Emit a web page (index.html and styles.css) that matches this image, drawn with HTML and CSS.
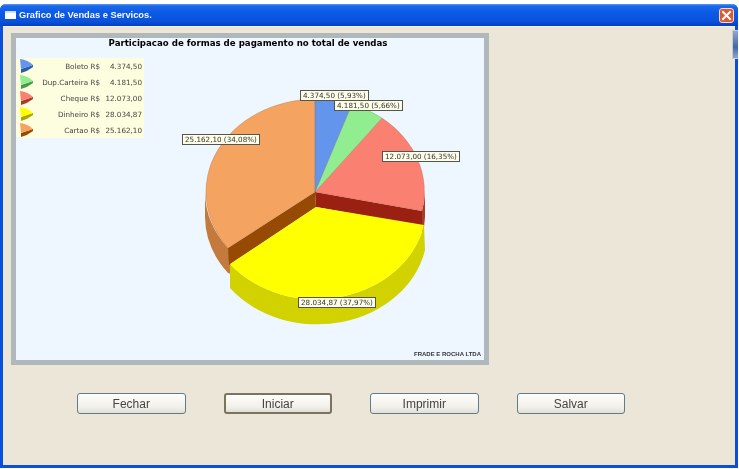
FILE: index.html
```html
<!DOCTYPE html>
<html lang="en">
<head>
  <meta charset="UTF-8">
  <meta name="viewport" content="width=device-width, initial-scale=1.0">
  <title>Grafico de Vendas e Servicos.</title>
  <link rel="stylesheet" href="styles.css">
</head>
<body>
  <div class="window">
    <header class="titlebar">
      <span class="app-icon"></span>
      <h1>Grafico de Vendas e Servicos.</h1>
      <button class="close-btn" aria-label="Fechar">
        <svg width="11" height="11" viewBox="0 0 11 11"><path d="M2 2 L9 9 M9 2 L2 9" stroke="#fff" stroke-width="2" stroke-linecap="square"/></svg>
      </button>
    </header>

    <div class="content">
      <span class="scroll-stub"></span>

      <div class="chart-frame">
        <div class="chart">
          <svg class="pie" viewBox="16 38 469 322" width="469" height="322">
            <!-- outer sides -->
            <path fill="#c47a3c" d="M205 192 A110 93 0 0 0 228 248 L231 262 L231 274 L228 273 A110 93 0 0 1 205 217 Z"/>
            <path fill="#a83a2a" d="M425 192 A110 93 0 0 1 422 211 L422 236 A110 93 0 0 0 425 217 Z"/>
            <!-- walls left open by the yellow slice -->
            <path fill="#9a2012" d="M315 192 L422 211 L422 226 L316 207 Z"/>
            <path fill="#964a04" d="M315 192 L228 248 L229 265 L316 207 Z"/>
            <!-- top faces -->
            <path class="slice" fill="#f4a460" d="M315 192 L228 248 A110 93 0 0 1 315 99 Z"/>
            <path class="slice" fill="#fa8072" d="M315 192 L382 118 A110 93 0 0 1 422 211 Z"/>
            <path class="slice" fill="#90ee90" d="M315 192 L352 104 A110 93 0 0 1 382 118 Z"/>
            <path class="slice" fill="#6495ed" d="M315 192 L315 99 A110 93 0 0 1 352 104 Z"/>
            <!-- yellow slice is pulled out of the pie -->
            <path fill="#d2d200" d="M424 225 A110 93 0 0 1 230 264 L230 288 A110 93 0 0 0 425 250 Z"/>
            <path fill="#ffff00" d="M316 207 L424 225 A110 93 0 0 1 230 264 Z"/>
          </svg>

          <h2 class="chart-title">Participacao de formas de pagamento no total de vendas</h2>

          <div class="legend">
            <svg class="key" width="14" height="14" viewBox="0 0 14 14"><path fill="#2f5aa8" d="M1 10 L13 6 L13 8 Q8 12 1 14 Z"/><path fill="#6495ed" d="M0 0 Q8 1 13 6 L1 10 Z"/></svg>
            <span class="name">Boleto R$</span><span class="value">4.374,50</span>
            <svg class="key" width="14" height="14" viewBox="0 0 14 14"><path fill="#4a9a4a" d="M1 10 L13 6 L13 8 Q8 12 1 14 Z"/><path fill="#90ee90" d="M0 0 Q8 1 13 6 L1 10 Z"/></svg>
            <span class="name">Dup.Carteira R$</span><span class="value">4.181,50</span>
            <svg class="key" width="14" height="14" viewBox="0 0 14 14"><path fill="#a83a2a" d="M1 10 L13 6 L13 8 Q8 12 1 14 Z"/><path fill="#fa8072" d="M0 0 Q8 1 13 6 L1 10 Z"/></svg>
            <span class="name">Cheque R$</span><span class="value">12.073,00</span>
            <svg class="key" width="14" height="14" viewBox="0 0 14 14"><path fill="#a8a800" d="M1 10 L13 6 L13 8 Q8 12 1 14 Z"/><path fill="#ffff00" d="M0 0 Q8 1 13 6 L1 10 Z"/></svg>
            <span class="name">Dinheiro R$</span><span class="value">28.034,87</span>
            <svg class="key" width="14" height="14" viewBox="0 0 14 14"><path fill="#964a04" d="M1 10 L13 6 L13 8 Q8 12 1 14 Z"/><path fill="#f4a460" d="M0 0 Q8 1 13 6 L1 10 Z"/></svg>
            <span class="name">Cartao R$</span><span class="value">25.162,10</span>
          </div>

          <span class="tag tag-boleto">4.374,50 (5,93%)</span>
          <span class="tag tag-dup">4.181,50 (5,66%)</span>
          <span class="tag tag-cheque">12.073,00 (16,35%)</span>
          <span class="tag tag-cartao">25.162,10 (34,08%)</span>
          <span class="tag tag-dinheiro">28.034,87 (37,97%)</span>

          <p class="company">FRADE E ROCHA LTDA</p>
        </div>
      </div>

      <div class="actions">
        <button class="btn">Fechar</button>
        <button class="btn btn-focus">Iniciar</button>
        <button class="btn">Imprimir</button>
        <button class="btn">Salvar</button>
      </div>
    </div>
  </div>
</body>
</html>
```

FILE: styles.css
```css
:root {
  --frame-blue: #0b50dc;
  --panel: #ece6d8;
  --chart-bg: #eef7ff;
  --legend-bg: #fdfde0;
  --text-grey: #444444;
}

html, body {
  height: 100%;
}

body {
  margin: 0;
  padding-top: 4px;
  box-sizing: border-box;
  overflow: hidden;
  background-color: #ffffff;
  font-family: "DejaVu Sans", sans-serif;
}

.window {
  display: flex;
  flex-direction: column;
  width: 738px;
  height: 464px;
  box-sizing: border-box;
  border: 3px solid var(--frame-blue);
  border-top: none;
  border-radius: 6px 6px 0 0;
  background-color: var(--panel);
  filter: blur(0.4px);
}

.titlebar {
  display: flex;
  align-items: center;
  flex: none;
  height: 22px;
  margin: 0 -3px;
  padding: 0 4px 0 5px;
  border-radius: 6px 6px 0 0;
  background: linear-gradient(#5a9cf4 0, #1a68ea 2px, #0a58e4 45%, #0a54dc 75%, #0440c4 100%);
}

.app-icon {
  width: 11px;
  height: 6px;
  border-top: 2px solid #cfe0f8;
  background-color: #ffffff;
}

.titlebar h1 {
  margin: 0 0 0 3px;
  font-family: "Liberation Sans", sans-serif;
  font-size: 9.3px;
  font-weight: bold;
  color: #f4f8ff;
}

.close-btn {
  display: flex;
  align-items: center;
  justify-content: center;
  width: 15px;
  height: 15px;
  margin-left: auto;
  padding: 0;
  border: 1px solid #f4d8cc;
  border-radius: 3px;
  background-color: #e0582e;
}

.content {
  position: relative;
  flex: 1;
  padding: 7px 0 0 8px;
  box-shadow: inset 0 2px 1px -1px #f6f2e8;
}

.scroll-stub {
  position: absolute;
  top: 4px;
  right: -3px;
  width: 5px;
  height: 27px;
  border: 1px solid #c8ccd0;
  border-right: none;
  background: linear-gradient(#8fa8cc, #3f68a8 60%, #8fa8cc);
}

.chart-frame {
  width: 478px;
  height: 332px;
  box-sizing: border-box;
  border: 5px solid #b0b8bc;
  box-shadow: inset 0 0 0 1px #98a2a8;
}

.chart {
  position: relative;
  display: flex;
  flex-direction: column;
  height: 100%;
  background-color: var(--chart-bg);
}

.pie {
  position: absolute;
  top: 0;
  left: 0;
}

.slice {
  stroke: rgba(120, 60, 30, 0.35);
  stroke-width: 0.5;
}

.chart-title {
  position: relative;
  margin: 0;
  padding-right: 4px;
  text-align: center;
  font-size: 8.65px;
  font-weight: bold;
  line-height: 11px;
  color: #000000;
}

.legend {
  position: relative;
  display: grid;
  grid-template-columns: 22px 62px 44px;
  grid-auto-rows: 16px;
  align-items: center;
  width: 128px;
  margin-top: 9px;
  background-color: var(--legend-bg);
  font-size: 7.2px;
  color: var(--text-grey);
}

.key {
  margin-left: 4px;
}

.name, .value {
  text-align: right;
  white-space: nowrap;
}

.value {
  padding-right: 2px;
}

.tag {
  position: absolute;
  box-sizing: border-box;
  height: 11px;
  padding: 0 2px;
  border: 1px solid #555550;
  background-color: #fdfde8;
  font-size: 7.2px;
  line-height: 9px;
  white-space: nowrap;
  color: #333333;
}

.tag-boleto { left: 284px; top: 52px; }
.tag-dup { left: 318px; top: 62px; }
.tag-cheque { left: 366px; top: 113px; }
.tag-cartao { left: 166px; top: 96px; }
.tag-dinheiro { left: 282px; top: 259px; }

.company {
  position: relative;
  margin: auto 3px 2px 0;
  text-align: right;
  font-family: "Liberation Sans", sans-serif;
  font-size: 6px;
  font-weight: bold;
  line-height: 8px;
  color: #333333;
}

.actions {
  display: flex;
  gap: 38px;
  margin: 28px 0 0 66px;
}

.btn {
  width: 108.5px;
  height: 21px;
  padding: 0;
  border: 1px solid #607c8c;
  border-radius: 3px;
  background: linear-gradient(#fdfdfb, #f2f0ea 70%, #e2dfd4);
  font-family: "Liberation Sans", sans-serif;
  font-size: 12px;
  color: var(--text-grey);
}

.btn-focus {
  border: 2px solid #787460;
}
```
